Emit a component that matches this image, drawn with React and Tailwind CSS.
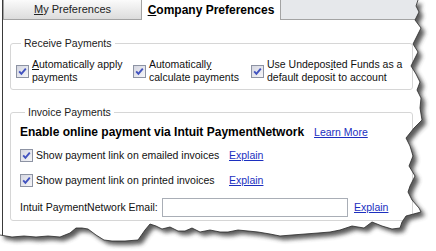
import React from 'react';

const paperEdge = [
    [418, 0], [416, 6], [419, 12], [415, 20], [421, 28], [417, 36], [413, 44], [418, 52], [414, 60],
    [411, 66], [416, 74], [420, 82], [417, 90], [421, 98], [420, 108], [422, 120], [414, 128],
    [406, 138], [410, 146], [413, 156], [409, 166], [415, 176], [410, 186], [408, 192], [412, 200],
    [419, 208], [421, 212], [406, 216], [402, 222], [400, 228],
    [392, 229], [382, 226], [372, 222], [364, 228], [352, 226], [340, 230], [330, 232], [318, 233],
    [305, 234], [292, 235], [280, 236], [270, 234], [258, 232], [248, 231], [238, 230], [228, 232],
    [220, 232], [210, 230], [200, 232], [192, 228], [185, 231], [178, 231], [170, 227], [162, 229],
    [156, 226], [150, 224], [145, 230], [138, 240], [125, 241], [112, 241], [104, 240], [96, 235],
    [88, 229], [82, 228], [76, 228], [70, 233], [60, 237], [48, 236], [36, 237], [24, 236],
    [12, 237], [0, 235],
];

const edgePoints = paperEdge.map(([x, y]) => `${x},${y}`).join(' ');
const paperPath = `M0,0 L${edgePoints.split(' ').join(' L')} Z`;
const outsidePath = `M0,0 H436 V251 H0 Z ${paperPath}`;

const CheckBox = () => (
    <svg width="13" height="13" viewBox="0 0 13 13" className="shrink-0">
        <defs>
            <linearGradient id="cbg" x1="0" y1="0" x2="1" y2="1">
                <stop offset="0" stopColor="#d3d5e0" />
                <stop offset="1" stopColor="#f7f7f9" />
            </linearGradient>
        </defs>
        <rect x="0.5" y="0.5" width="12" height="12" fill="url(#cbg)" stroke="#8d93a3" />
        <path d="M3.2 6.4 L5.4 8.8 L9.8 3.6" fill="none" stroke="#4152bf" strokeWidth="1.9" />
    </svg>
);

const TornEdge = () => (
    <svg className="absolute inset-0 pointer-events-none" width="436" height="251" viewBox="0 0 436 251">
        <defs>
            <filter id="soft" x="-10%" y="-10%" width="120%" height="120%">
                <feGaussianBlur stdDeviation="2.2" />
            </filter>
            <clipPath id="outside">
                <path d={outsidePath} clipRule="evenodd" />
            </clipPath>
        </defs>
        <path d={outsidePath} fill="#fff" fillRule="evenodd" />
        <g clipPath="url(#outside)">
            <path d={paperPath} fill="#3c3c3c" transform="translate(4,4)" filter="url(#soft)" opacity="0.85" />
        </g>
        <polyline points={edgePoints} fill="none" stroke="#2a2a2a" strokeWidth="0.8" />
    </svg>
);

const Link = ({ children }) => (
    <span className="text-[#1c2fbf] underline underline-offset-1 cursor-pointer">{children}</span>
);

export default function App() {
    return (
        <div className="relative w-[436px] h-[251px] overflow-hidden bg-white text-[10.5px] leading-[13px] text-[#111] font-['Liberation_Sans',Arial,sans-serif]">
            <div className="ml-[2px] w-[420px] h-[240px] border-l border-[#3a3a3a]">
                {/* Tabs */}
                <div className="flex h-[20px]">
                    <div className="w-[138px] flex items-center justify-center border-l border-b border-[#a3a3a3] bg-gradient-to-b from-[#fbfbfb] to-[#dcdcdc] text-[11px] text-[#222]">
                        <span><span className="underline">M</span>y Preferences</span>
                    </div>
                    <div className="w-[140px] flex items-center justify-center border-l border-r border-[#a3a3a3] bg-white text-[12px] font-bold text-black">
                        <span><span className="underline">C</span>ompany Preferences</span>
                    </div>
                    <div className="flex-1 border-b border-[#a3a3a3] bg-[#e6e8eb]" />
                </div>

                {/* Receive Payments */}
                <fieldset className="mt-[17px] ml-[7px] w-[403px] border border-[#d6d6d6] rounded-[3px] pl-[5px] pt-[8px] pb-[5px]">
                    <legend className="ml-[5px] px-[3px] text-[#222]">Receive Payments</legend>
                    <div className="flex items-center">
                        <div className="w-[117px] flex items-center gap-[3px]">
                            <CheckBox />
                            <span><span className="underline">A</span>utomatically apply payments</span>
                        </div>
                        <div className="w-[118px] flex items-center gap-[3px]">
                            <CheckBox />
                            <span>Automaticall<span className="underline">y</span> calculate payments</span>
                        </div>
                        <div className="flex-1 flex items-center gap-[3px]">
                            <CheckBox />
                            <span>Use Undepos<span className="underline">i</span>ted Funds as a default deposit to account</span>
                        </div>
                    </div>
                </fieldset>

                {/* Invoice Payments */}
                <fieldset className="mt-[16px] ml-[7px] w-[403px] border border-[#d6d6d6] rounded-[3px] pl-[9px] pt-[6px] pb-[3px]">
                    <legend className="ml-[5px] px-[3px] text-[#222]">Invoice Payments</legend>
                    <div className="flex items-center h-[14px]">
                        <span className="text-[12px] leading-[14px] font-bold text-black">
                            Enable online payment via Intuit PaymentNetwork
                        </span>
                        <span className="ml-[10px]"><Link>Learn More</Link></span>
                    </div>
                    <div className="mt-[6px] h-[20px] flex items-center">
                        <CheckBox />
                        <span className="ml-[3px] w-[193px]">Show payment link on emailed invoices</span>
                        <Link>Explain</Link>
                    </div>
                    <div className="mt-[5px] h-[20px] flex items-center">
                        <CheckBox />
                        <span className="ml-[3px] w-[193px]">Show payment link on printed invoices</span>
                        <Link>Explain</Link>
                    </div>
                    <div className="mt-[8px] flex items-center">
                        <span className="w-[142px]">Intuit PaymentNetwork Email:</span>
                        <div className="w-[186px] h-[19px] border border-[#a9aeb6] bg-white" />
                        <span className="ml-[6px]"><Link>Explain</Link></span>
                    </div>
                </fieldset>
            </div>
            <TornEdge />
        </div>
    );
}
